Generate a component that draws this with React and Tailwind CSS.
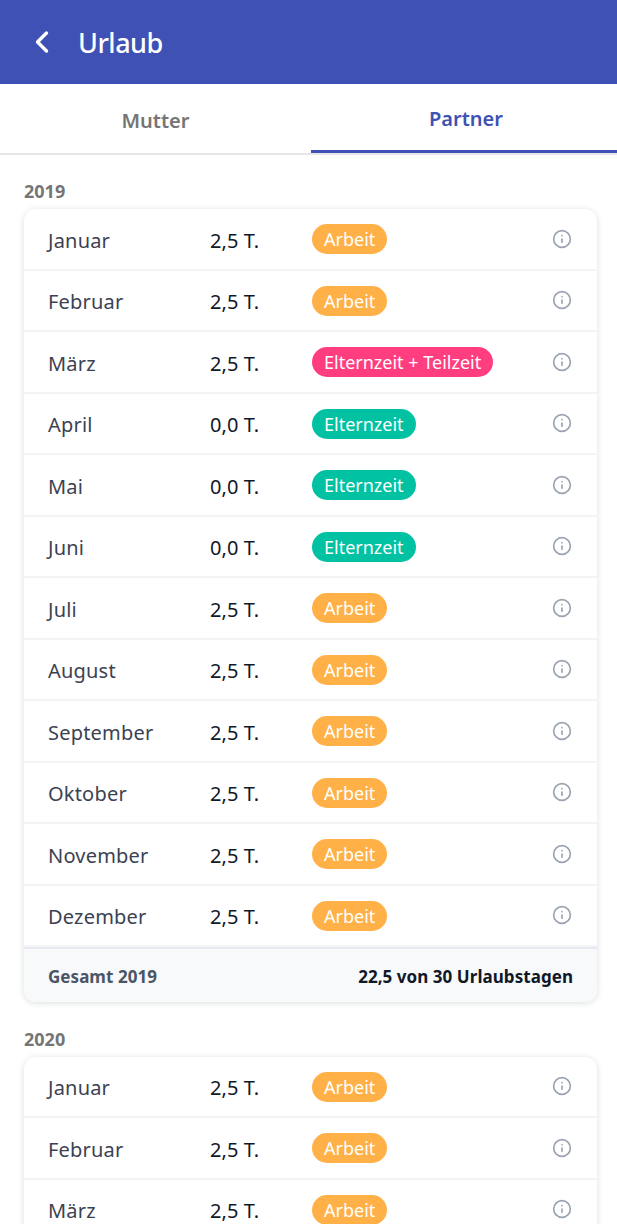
import { ChevronLeft, Info } from 'lucide-react';

const BADGES = {
  arbeit: { label: 'Arbeit', className: 'bg-[#ffb046]' },
  eltern: { label: 'Elternzeit', className: 'bg-[#00c2a2]' },
  teilzeit: { label: 'Elternzeit + Teilzeit', className: 'bg-[#ff3d7f]' },
};

const months2019 = [
  ['Januar', '2,5 T.', 'arbeit'],
  ['Februar', '2,5 T.', 'arbeit'],
  ['März', '2,5 T.', 'teilzeit'],
  ['April', '0,0 T.', 'eltern'],
  ['Mai', '0,0 T.', 'eltern'],
  ['Juni', '0,0 T.', 'eltern'],
  ['Juli', '2,5 T.', 'arbeit'],
  ['August', '2,5 T.', 'arbeit'],
  ['September', '2,5 T.', 'arbeit'],
  ['Oktober', '2,5 T.', 'arbeit'],
  ['November', '2,5 T.', 'arbeit'],
  ['Dezember', '2,5 T.', 'arbeit'],
];

const months2020 = [
  ['Januar', '2,5 T.', 'arbeit'],
  ['Februar', '2,5 T.', 'arbeit'],
  ['März', '2,5 T.', 'arbeit'],
];

function MonthRow({ month, days, badge }) {
  const { label, className } = BADGES[badge];
  return (
    <div className="flex h-[61.5px] items-center border-b-2 border-[#f4f4f6] pl-6 pr-[25px]">
      <span className="mt-1 w-[162px] text-[20px] leading-none tracking-[0.2px] text-[#3b4252]">{month}</span>
      <span className="mt-1 w-[102px] text-[20px] leading-none tracking-[0.1px] text-[#111827]">{days}</span>
      <span className={`mt-px flex h-[30px] items-center rounded-full px-3 pt-px text-[18px] text-white ${className}`}>
        {label}
      </span>
      <Info className="ml-auto h-5 w-5 text-[#9aa3b2]" strokeWidth={2} />
    </div>
  );
}

function YearCard({ year, months, total }) {
  return (
    <section>
      <h2 className="mb-[7px] h-[21px] px-6 text-[18px] font-bold leading-[21px] text-[#757575]">{year}</h2>
      <div className="ml-6 mr-5 overflow-hidden rounded-xl bg-white shadow-[0_1px_6px_rgba(31,41,55,0.16)]">
        {months.map(([month, days, badge]) => (
          <MonthRow key={month} month={month} days={days} badge={badge} />
        ))}
        {total && (
          <div className="flex h-[55px] items-center justify-between border-t-2 border-[#e8e9f0] bg-[#f8f9fb] px-6 pt-0.5 text-[17px] font-bold tracking-[0.05px]">
            <span className="text-[#4b5563]">Gesamt {year}</span>
            <span className="text-[#111827]">{total}</span>
          </div>
        )}
      </div>
    </section>
  );
}

export default function App() {
  return (
    <div className="h-[1224px] overflow-hidden bg-white font-['Noto_Sans',sans-serif]">
      <header className="flex h-[84px] items-center gap-[18px] bg-[#3f51b5] pl-[24px] text-white">
        <ChevronLeft className="h-9 w-9" strokeWidth={2.25} />
        <h1 className="pt-0.5 text-[27px] font-medium tracking-[-0.5px]">Urlaub</h1>
      </header>

      <nav className="flex h-[71px] border-b-2 border-[#e6e6ea] text-[20px] font-semibold">
        <button type="button" className="w-[311px] pt-1 text-[#757575]">
          Mutter
        </button>
        <button type="button" className="flex-1 border-b-[3px] border-[#3f51b5] pl-1 pt-1 text-[#3f51b5]">
          Partner
        </button>
      </nav>

      <main className="flex flex-col gap-[26.5px] pt-[26px]">
        <YearCard year="2019" months={months2019} total="22,5 von 30 Urlaubstagen" />
        <YearCard year="2020" months={months2020} />
      </main>
    </div>
  );
}
